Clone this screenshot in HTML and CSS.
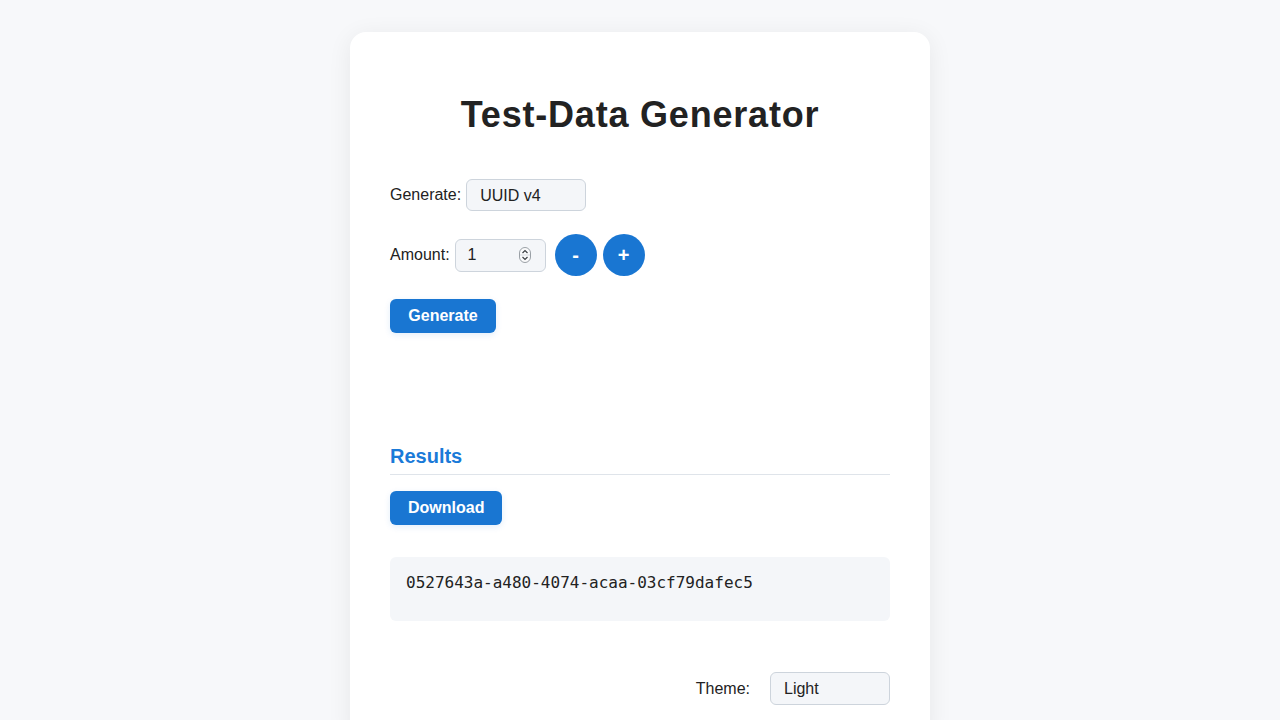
FILE: index.html
```html
<!DOCTYPE html>
<html lang="en">
<head>
<meta charset="utf-8">
<title>Test-Data Generator</title>
<link rel="stylesheet" href="styles.css">
</head>
<body>
<main class="card">
  <h1 class="title">Test-Data Generator</h1>
  <div class="row">
    <label class="label" for="type">Generate:</label>
    <select id="type" class="select">
      <option>UUID v4</option>
    </select>
  </div>
  <div class="row">
    <label class="label" for="amount">Amount:</label>
    <div class="number">
      <input id="amount" class="number-input" type="number" value="1" min="1">
      <svg class="spin" width="12" height="16" viewBox="0 0 12 16" aria-hidden="true">
        <rect x="0.5" y="0.5" width="11" height="15" rx="5.5" fill="#fbfbfc" stroke="#9aa0a6"/>
        <line x1="1" y1="8" x2="11" y2="8" stroke="#d6d9dd"/>
        <polyline points="3.5,6 6,3.5 8.5,6" fill="none" stroke="#3c4043" stroke-width="1.2"/>
        <polyline points="3.5,10 6,12.5 8.5,10" fill="none" stroke="#3c4043" stroke-width="1.2"/>
      </svg>
    </div>
    <div class="steppers">
      <button class="circle">-</button>
      <button class="circle">+</button>
    </div>
  </div>
  <div class="row">
    <button class="btn btn-generate">Generate</button>
  </div>
  <section class="results">
    <h2 class="results-title">Results</h2>
    <button class="btn">Download</button>
    <pre class="output">0527643a-a480-4074-acaa-03cf79dafec5</pre>
  </section>
  <div class="theme-row">
    <label class="label" for="theme">Theme:</label>
    <select id="theme" class="select">
      <option>Light</option>
    </select>
  </div>
</main>
</body>
</html>
```

FILE: styles.css
```css
* { box-sizing: border-box; }
html, body { margin: 0; padding: 0; }
body {
  background: #f7f8fa;
  font-family: "Liberation Sans", Arial, sans-serif;
  color: #222;
  font-size: 16px;
  padding-top: 32px;
}
.card {
  width: 580px;
  margin: 0 auto;
  background: #fff;
  border-radius: 16px;
  box-shadow: 0 4px 24px rgba(0, 0, 0, 0.07);
  padding: 62px 40px 40px;
}
.title {
  margin: 0 0 43px;
  text-align: center;
  font-size: 36px;
  line-height: 42px;
  font-weight: 700;
  letter-spacing: 0.8px;
  color: #222;
}
.row {
  display: flex;
  align-items: center;
  gap: 5px;
  margin-bottom: 23px;
}
.label { color: #222; font-size: 16px; }
.select {
  appearance: none;
  -webkit-appearance: none;
  width: 120px;
  height: 33px;
  padding: 0 13px;
  font-family: "Liberation Sans", Arial, sans-serif;
  font-size: 16px;
  color: #222;
  background: #f4f6f9;
  border: 1px solid #cdd4dc;
  border-radius: 6px;
}
.row .select { height: 32px; }
.number {
  display: flex;
  align-items: center;
  width: 91px;
  height: 33px;
  padding: 0 14px 0 12px;
  background: #f4f6f9;
  border: 1px solid #cdd4dc;
  border-radius: 6px;
}
.number-input {
  flex: 1;
  min-width: 0;
  border: none;
  background: transparent;
  padding: 0;
  font-family: "Liberation Sans", Arial, sans-serif;
  font-size: 16px;
  color: #222;
  outline: none;
  -moz-appearance: textfield;
}
.number-input::-webkit-inner-spin-button,
.number-input::-webkit-outer-spin-button {
  -webkit-appearance: none;
  margin: 0;
}
.spin { flex: none; display: block; }
.steppers {
  display: flex;
  gap: 6px;
  margin-left: 4px;
}
.circle {
  width: 42px;
  height: 42px;
  border-radius: 50%;
  border: none;
  background: #1976d2;
  color: #fff;
  font-family: "Liberation Sans", Arial, sans-serif;
  font-size: 20px;
  font-weight: 700;
  padding: 0;
  line-height: 42px;
}
.btn {
  height: 34px;
  padding: 0 18px;
  border: none;
  border-radius: 6px;
  background: #1976d2;
  color: #fff;
  font-family: "Liberation Sans", Arial, sans-serif;
  font-size: 16px;
  font-weight: 700;
  box-shadow: 0 2px 6px rgba(25, 118, 210, 0.12);
}
.btn-generate { width: 106px; padding: 0; }
.results { margin-top: 111px; }
.results-title {
  margin: 0 0 16px;
  padding-bottom: 6px;
  font-size: 20px;
  line-height: 24px;
  font-weight: 700;
  color: #1a7ad8;
  border-bottom: 1px solid #dfe4ea;
}
.output {
  margin: 32px 0 0;
  padding: 16px;
  min-height: 64px;
  background: #f4f6f9;
  border-radius: 6px;
  font-family: "DejaVu Sans Mono", monospace;
  font-size: 16px;
  line-height: 19px;
  color: #222;
}
.theme-row {
  display: flex;
  justify-content: flex-end;
  align-items: center;
  gap: 20px;
  margin-top: 51px;
}
```
